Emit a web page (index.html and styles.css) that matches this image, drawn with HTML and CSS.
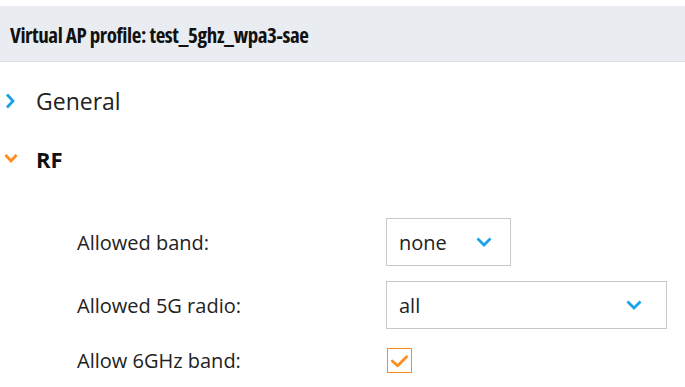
FILE: index.html
```html
<!DOCTYPE html>
<html>
<head>
<meta charset="utf-8">
<link rel="stylesheet" href="styles.css">
</head>
<body>
<div class="page">
  <div class="header">Virtual AP profile: test_5ghz_wpa3-sae</div>
  <div class="section first">
    <span class="chev"><svg width="16" height="16" viewBox="0 0 16 16"><path d="M7 1.5 L13 8 L7 14.5" fill="none" stroke="#1aa3e8" stroke-width="2.8"/></svg></span>
    <span class="sec-title">General</span>
  </div>
  <div class="section open">
    <span class="chev"><svg width="18" height="12" viewBox="0 0 18 12"><path d="M5.5 2 L11 8 L16.5 2" fill="none" stroke="#ff8c1a" stroke-width="2.8"/></svg></span>
    <span class="sec-title bold">RF</span>
  </div>
  <div class="form">
    <div class="row">
      <div class="label">Allowed band:</div>
      <div class="select small"><span>none</span>
        <svg width="16" height="12" viewBox="0 0 16 12"><path d="M1.5 2.5 L8 9 L14.5 2.5" fill="none" stroke="#1aa3e8" stroke-width="2.8"/></svg>
      </div>
    </div>
    <div class="row">
      <div class="label">Allowed 5G radio:</div>
      <div class="select wide"><span>all</span>
        <svg width="16" height="12" viewBox="0 0 16 12"><path d="M1.5 2.5 L8 9 L14.5 2.5" fill="none" stroke="#1aa3e8" stroke-width="2.8"/></svg>
      </div>
    </div>
    <div class="row last">
      <div class="label">Allow 6GHz band:</div>
      <div class="checkbox">
        <svg width="24" height="24" viewBox="0 0 24 24"><path d="M4.5 12 L10 17 L19.5 7.5" fill="none" stroke="#ff8c1a" stroke-width="2.8" stroke-linecap="round" stroke-linejoin="round"/></svg>
      </div>
    </div>
  </div>
</div>
</body>
</html>
```
FILE: styles.css
```css
html, body {
  margin: 0;
  padding: 0;
  background: #ffffff;
}
body {
  font-family: "Open Sans", "Liberation Sans", sans-serif;
  color: #1a1a1a;
}
.page {
  padding-top: 6px;
}
.header {
  height: 56px;
  box-sizing: border-box;
  background: #e9ecf0;
  border-bottom: 1px solid #dcdfe3;
  padding-left: 10px;
  padding-top: 2px;
  display: flex;
  align-items: center;
  font-weight: 700;
  font-size: 21px;
  letter-spacing: -0.4px;
  font-stretch: 75%;
  color: #111;
}
.section {
  display: flex;
  align-items: center;
  height: 58px;
}
.section.first {
  margin-top: 10px;
}
.chev {
  width: 36px;
  flex: none;
  display: flex;
  align-items: center;
}
.sec-title {
  font-size: 23px;
  color: #222;
}
.sec-title.bold {
  font-weight: 700;
  font-size: 22px;
  color: #111;
}
.form {
  padding-top: 30px;
  padding-left: 77px;
  display: flex;
  flex-direction: column;
  gap: 15px;
}
.row {
  display: flex;
  align-items: center;
}
.row.last {
  margin-top: 3px;
}
.label {
  width: 309px;
  font-size: 20px;
  color: #222;
}
.select {
  box-sizing: border-box;
  height: 48px;
  border: 1px solid #c8c8c8;
  display: flex;
  align-items: center;
  justify-content: space-between;
  padding: 0 18px 0 12px;
  font-size: 20px;
  color: #222;
}
.select.small { width: 125px; }
.select.wide { width: 281px; padding-right: 24px; }
.checkbox {
  box-sizing: border-box;
  width: 25px;
  height: 25px;
  border: 1.5px solid #ff8c1a;
  margin-left: 1px;
  display: flex;
  align-items: center;
  justify-content: center;
}
```
